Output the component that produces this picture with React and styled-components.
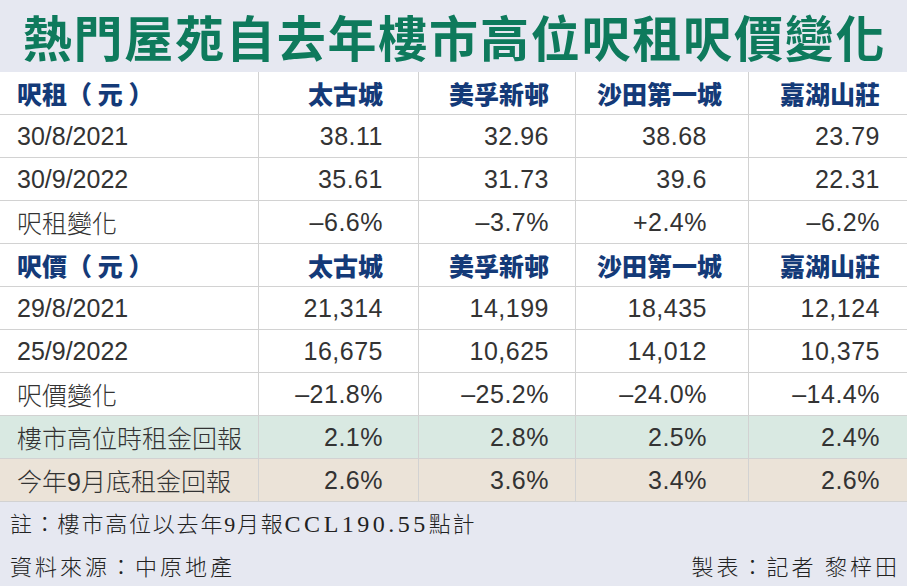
import React from "react";
import styled, { createGlobalStyle } from "styled-components";

const GlobalStyle = createGlobalStyle`
  html, body { margin: 0; padding: 0; background: #e6e8f1; }
  #root { width: 907px; height: 586px; overflow: hidden; }
`;

const sections = [
  {
    title: "呎租（ 元 ）",
    rows: [
      ["30/8/2021", "38.11", "32.96", "38.68", "23.79"],
      ["30/9/2022", "35.61", "31.73", "39.6", "22.31"],
      ["呎租變化", "–6.6%", "–3.7%", "+2.4%", "–6.2%"],
    ],
  },
  {
    title: "呎價（ 元 ）",
    rows: [
      ["29/8/2021", "21,314", "14,199", "18,435", "12,124"],
      ["25/9/2022", "16,675", "10,625", "14,012", "10,375"],
      ["呎價變化", "–21.8%", "–25.2%", "–24.0%", "–14.4%"],
    ],
  },
];

const estates = ["太古城", "美孚新邨", "沙田第一城", "嘉湖山莊"];

const yields = [
  { tone: "green", cells: ["樓市高位時租金回報", "2.1%", "2.8%", "2.5%", "2.4%"] },
  { tone: "beige", cells: ["今年9月底租金回報", "2.6%", "3.6%", "3.4%", "2.6%"] },
];

const headPad = [35, 26, 26, 27];
const numPad = [35, 26, 41, 27];

const App = () => {
  return (
    <Page>
      <GlobalStyle />
      <TitleBar>
        <Title>熱門屋苑自去年樓市高位呎租呎價變化</Title>
      </TitleBar>
      <Table>
        {sections.map((s) => (
          <React.Fragment key={s.title}>
            <Row>
              <HeadLabel>{s.title}</HeadLabel>
              {estates.map((e, i) => (
                <HeadCell key={e} $pad={headPad[i]}>{e}</HeadCell>
              ))}
            </Row>
            {s.rows.map((r) => (
              <Row key={r[0]}>
                <Label>{r[0]}</Label>
                {r.slice(1).map((v, i) => (
                  <NumCell key={i} $pad={numPad[i]}>{v}</NumCell>
                ))}
              </Row>
            ))}
          </React.Fragment>
        ))}
        {yields.map((y) => (
          <Row key={y.tone} $tone={y.tone}>
            <Label>{y.cells[0]}</Label>
            {y.cells.slice(1).map((v, i) => (
              <NumCell key={i} $pad={numPad[i]}>{v}</NumCell>
            ))}
          </Row>
        ))}
      </Table>
      <Footer>
        <Note>註：樓市高位以去年9月報<Latin>CCL190.55</Latin>點計</Note>
        <Credits>
          <Credit>資料來源：中原地產</Credit>
          <Credit>製表：記者 黎梓田</Credit>
        </Credits>
      </Footer>
    </Page>
  );
};

export default App;

const Page = styled.div`
  width: 907px;
  height: 586px;
  background: #e6e8f1;
  display: flex;
  flex-direction: column;
`;

const TitleBar = styled.div`
  height: 72px;
  display: flex;
  align-items: center;
  justify-content: center;
`;

const Title = styled.h1`
  margin: 0;
  font-family: "Noto Sans CJK TC", sans-serif;
  font-weight: 700;
  font-size: 49px;
  letter-spacing: 1.8px;
  line-height: 60px;
  white-space: nowrap;
  color: #0e7a5c;
  padding-left: 2px;
`;

const Table = styled.div`
  background: #fff;
  display: flex;
  flex-direction: column;
`;

const Row = styled.div`
  display: grid;
  grid-template-columns: 258px 160px 157px 173px 1fr;
  height: 43px;
  box-sizing: border-box;
  border-bottom: 1px solid #d2d2d2;
  background: ${(p) =>
    p.$tone === "green" ? "#d9e9e2" : p.$tone === "beige" ? "#ebe3d8" : "#fff"};
  & > * + * {
    border-left: 1px solid #d2d2d2;
  }
`;

const Cell = styled.div`
  display: flex;
  align-items: center;
  box-sizing: border-box;
  white-space: nowrap;
`;

const HeadLabel = styled(Cell)`
  padding-left: 17px;
  font-family: "Noto Sans CJK TC", sans-serif;
  font-weight: 900;
  font-size: 25px;
  color: #143a78;
`;

const HeadCell = styled(Cell)`
  justify-content: flex-end;
  padding-right: ${(p) => p.$pad}px;
  font-family: "Noto Sans CJK TC", sans-serif;
  font-weight: 900;
  font-size: 25px;
  color: #143a78;
`;

const Label = styled(Cell)`
  padding-left: 17px;
  font-family: "Liberation Sans", "Noto Sans CJK TC", sans-serif;
  font-weight: 300;
  font-size: 25px;
  color: #333;
`;

const NumCell = styled(Cell)`
  justify-content: flex-end;
  padding-right: ${(p) => p.$pad}px;
  font-family: "Liberation Sans", sans-serif;
  font-size: 25px;
  letter-spacing: 0.5px;
  color: #333;
`;

const Footer = styled.div`
  flex: 1;
  display: flex;
  flex-direction: column;
  padding: 7px 7px 0 10px;
  gap: 13px;
`;

const Note = styled.div`
  font-family: "Liberation Serif", "Noto Sans CJK TC", serif;
  font-size: 22px;
  font-weight: 300;
  letter-spacing: 1.8px;
  color: #222;
  line-height: 30px;
`;

const Latin = styled.span`
  letter-spacing: 3.5px;
  font-size: 24px;
`;

const Credits = styled.div`
  display: flex;
  justify-content: space-between;
`;

const Credit = styled(Note)`
  letter-spacing: 3px;
`;
